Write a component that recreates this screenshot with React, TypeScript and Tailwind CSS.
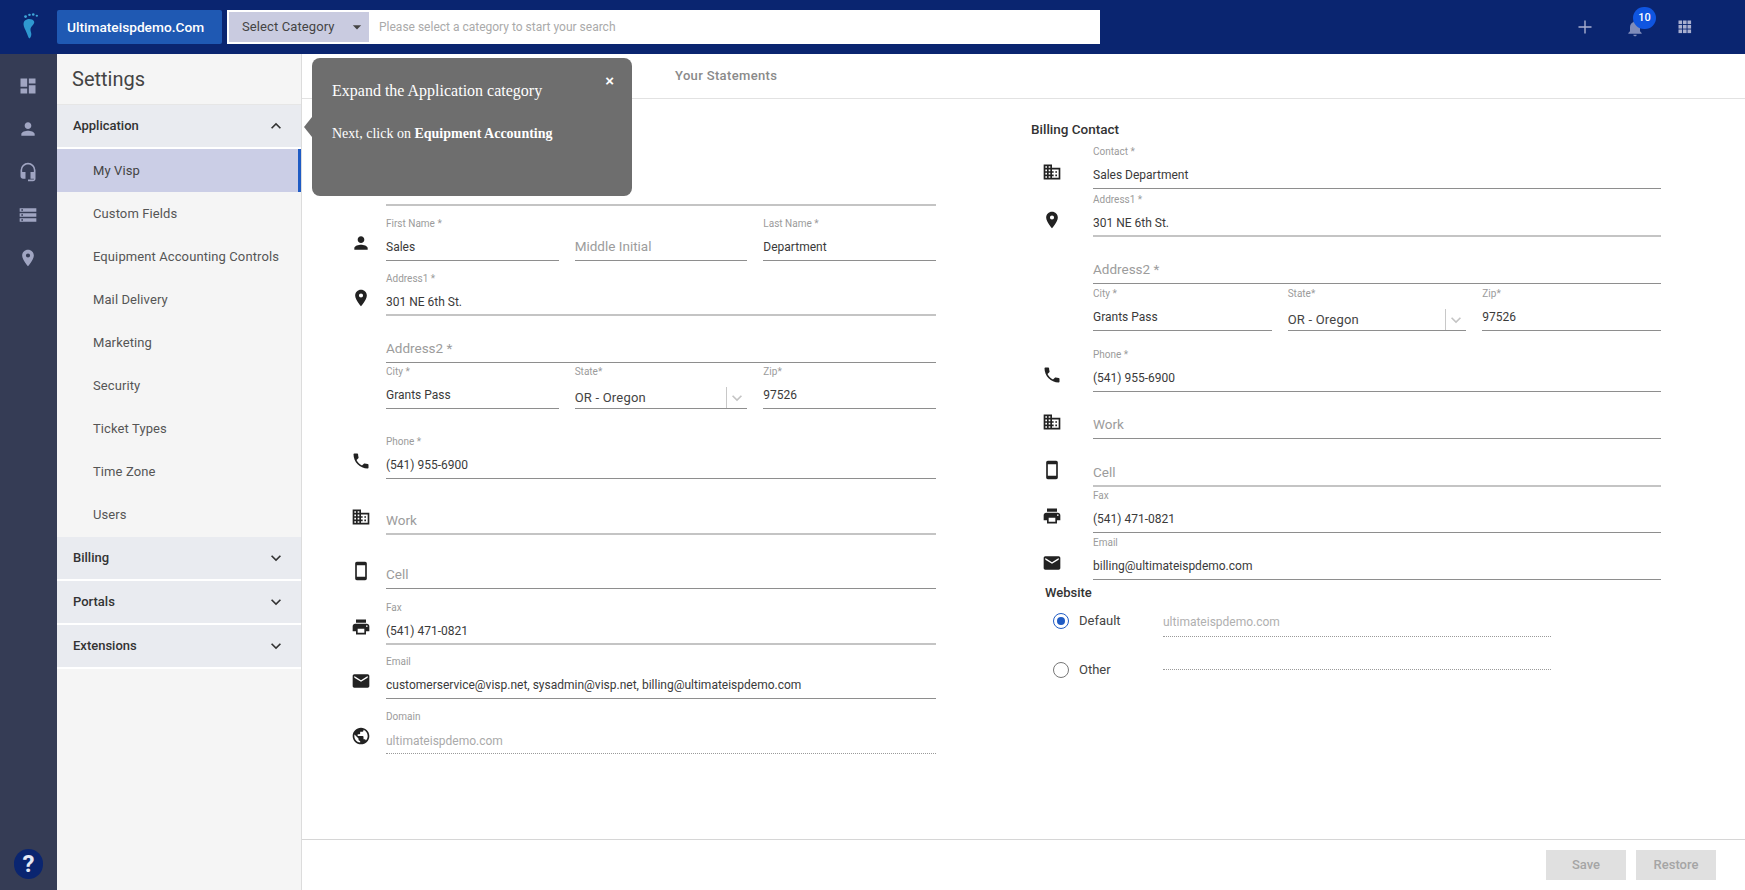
import React from "react";
import {
  MdDashboard, MdPerson, MdHeadsetMic, MdStorage, MdPlace, MdDomain, MdPhone, MdStayCurrentPortrait,
  MdPrint, MdEmail, MdPublic, MdNotifications, MdExpandLess, MdExpandMore, MdArrowDropDown,
} from "react-icons/md";

type IconT = React.ComponentType<{ className?: string }>;

function Label({ children }: { children: React.ReactNode }) {
  return <div className="text-[10px] leading-[12px] text-[#9b9b9b] mb-[5px] whitespace-nowrap">{children}</div>;
}

function Field({ label, value, placeholder, soft, cls }: { label?: string; value?: string; placeholder?: string; soft?: boolean; cls?: string }) {
  return (
    <div className={`flex flex-col justify-end min-w-0 ${cls ?? "flex-1"}`}>
      {label && <Label>{label}</Label>}
      <div className={`h-[26px] flex items-center ${soft ? "border-b-2 border-[#c4c4c4]" : "border-b border-[#8e8e8e]"}`}>
        {placeholder ? (
          <span className="text-[13.5px] text-[#9c9c9c] -mt-[2px]">{placeholder}</span>
        ) : (
          <span className="text-[12px] whitespace-nowrap text-[#3a3a3a] -mt-[1px]">{value}</span>
        )}
      </div>
    </div>
  );
}

function StateField() {
  return (
    <div className="flex-1 flex flex-col justify-end min-w-0">
      <Label>State*</Label>
      <div className="h-[26px] border-b border-[#8e8e8e] flex items-end justify-between">
        <span className="text-[13px] tracking-[0.2px] text-[#444] pb-[1px]">OR - Oregon</span>
        <span className="w-[21px] h-[21px] border-l border-[#c8c8c8] flex items-center justify-center">
          <MdExpandMore className="text-[20px] text-[#c4c4c4]" />
        </span>
      </div>
    </div>
  );
}

function Row({ icon: Icon, h, gapCls, children }: { icon?: IconT; h: string; gapCls: string; children: React.ReactNode }) {
  return (
    <div className={`flex items-end ${h}`}>
      <div className={`w-[22px] shrink-0 h-[22px] flex items-center justify-center ${gapCls}`}>
        {Icon && <Icon className="text-[20px] text-[#222]" />}
      </div>
      <div className="flex-1 flex gap-[16px] min-w-0">{children}</div>
    </div>
  );
}

function Foot() {
  return (
    <svg width="16" height="26" viewBox="2.500 2.500 13.500 24" preserveAspectRatio="none">
      <path d="M5 9.500c2-2.300 6.500-1.800 7.600.6.9 2-1.200 3.600-2.400 5.600-.9 1.600-.5 3.300 0 5 .5 1.800-.1 4.300-1.500 5.300-.7-.4-1.500-3.300-2.500-5.800-1-2.600-2.300-4.700-2.400-7 0-1.500.3-2.700 1.200-3.700z" fill="#2e98d0" />
      <circle cx="5.500" cy="5.800" r="1.200" fill="#3fa6d8" />
      <circle cx="8.800" cy="4.200" r="1.100" fill="#3fa6d8" />
      <circle cx="12" cy="3.900" r="1.100" fill="#3fa6d8" />
      <circle cx="15" cy="5" r="1" fill="#3fa6d8" />
    </svg>
  );
}

function Rail() {
  const icons: IconT[] = [MdDashboard, MdPerson, MdHeadsetMic, MdStorage, MdPlace];
  return (
    <aside className="w-[57px] shrink-0 bg-[#353c55] flex flex-col items-center pt-[10px]">
      {icons.map((I, i) => (
        <div key={i} className="h-[43px] w-full flex items-center justify-center">
          <I className="text-[20px] text-[#a0a5c2] -ml-[1px]" />
        </div>
      ))}
      <div className="mt-auto mb-[11px] w-[29px] h-[30px] rounded-full bg-[#0a2570] flex items-center justify-center text-[#e6e9f5] text-[24px] font-bold leading-none">?</div>
    </aside>
  );
}

function Section({ label, open }: { label: string; open?: boolean }) {
  const Ico = open ? MdExpandLess : MdExpandMore;
  return (
    <div className="h-[44px] bg-[#e9ebf0] border-b-2 border-white flex items-center justify-between pl-[16px] pr-[15px] shrink-0">
      <span className="text-[13px] font-medium text-[#333]">{label}</span>
      <Ico className="text-[20px] text-[#333]" />
    </div>
  );
}

function Item({ label, active }: { label: string; active?: boolean }) {
  return (
    <div className={`h-[43px] flex items-center pl-[36px] text-[13px] tracking-[0.1px] shrink-0 ${active ? "bg-[#cbcee6] border-r-[3px] border-[#1f5bc4] text-[#444]" : "text-[#555]"}`}>
      {label}
    </div>
  );
}

function SettingsNav() {
  return (
    <nav className="w-[245px] shrink-0 bg-[#f5f5f5] border-r border-[#dcdcdc] flex flex-col">
      <div className="h-[51px] shrink-0 flex items-center pl-[15px] text-[20px] text-[#444] border-b border-[#e6e6e6]">Settings</div>
      <Section label="Application" open />
      <div className="pb-[1px] flex flex-col">
        <Item label="My Visp" active />
        {["Custom Fields", "Equipment Accounting Controls", "Mail Delivery", "Marketing", "Security", "Ticket Types", "Time Zone", "Users"].map((l) => (
          <Item key={l} label={l} />
        ))}
      </div>
      <Section label="Billing" />
      <Section label="Portals" />
      <Section label="Extensions" />
    </nav>
  );
}

function LeftForm() {
  const g = "mr-[14px] mb-[7px]";
  return (
    <div className="w-[586px] ml-[48px] shrink-0">
      <Row h="h-[107px]" gapCls={g}><Field soft value="" /></Row>
      <Row icon={MdPerson} h="h-[55px]" gapCls={g}>
        <Field label="First Name *" value="Sales" />
        <Field placeholder="Middle Initial" />
        <Field label="Last Name *" value="Department" />
      </Row>
      <Row icon={MdPlace} h="h-[55px]" gapCls={g}><Field soft label="Address1 *" value="301 NE 6th St." /></Row>
      <Row h="h-[47px]" gapCls={g}><Field placeholder="Address2 *" /></Row>
      <Row h="h-[46px]" gapCls={g}>
        <Field label="City *" value="Grants Pass" />
        <StateField />
        <Field label="Zip*" value="97526" />
      </Row>
      <Row icon={MdPhone} h="h-[70px]" gapCls={g}><Field label="Phone *" value="(541) 955-6900" /></Row>
      <Row icon={MdDomain} h="h-[56px]" gapCls={g}><Field soft placeholder="Work" /></Row>
      <Row icon={MdStayCurrentPortrait} h="h-[54px]" gapCls={g}><Field placeholder="Cell" /></Row>
      <Row icon={MdPrint} h="h-[56px]" gapCls={g}><Field soft label="Fax" value="(541) 471-0821" /></Row>
      <Row icon={MdEmail} h="h-[54px]" gapCls={g}><Field label="Email" value="customerservice@visp.net, sysadmin@visp.net, billing@ultimateispdemo.com" /></Row>
      <Row icon={MdPublic} h="h-[55px]" gapCls={g}>
        <div className="flex-1 flex flex-col justify-end">
          <Label>Domain</Label>
          <div className="h-[26px] flex items-center border-b border-dotted border-[#9a9a9a] text-[12px] text-[#aaa]">ultimateispdemo.com</div>
        </div>
      </Row>
    </div>
  );
}

function Radio({ on, label }: { on?: boolean; label: string }) {
  return (
    <div className="w-[118px] h-[20px] pl-[8px] flex items-center shrink-0">
      <span className={`w-[16px] h-[16px] rounded-full border-[1.5px] flex items-center justify-center ${on ? "border-[#1f5bc4]" : "border-[#777]"}`}>
        {on && <span className="w-[8px] h-[8px] rounded-full bg-[#1f5bc4]" />}
      </span>
      <span className="ml-[10px] text-[13px] text-[#444]">{label}</span>
    </div>
  );
}

function RightForm() {
  const g = "ml-[10px] mr-[30px] mb-[6px]";
  return (
    <div className="w-[630px] ml-[95px] shrink-0 pt-[21px]">
      <div className="h-[18px] flex items-center text-[13.5px] font-medium text-[#333]">Billing Contact</div>
      <Row icon={MdDomain} h="h-[51px]" gapCls={g}><Field label="Contact *" value="Sales Department" /></Row>
      <Row icon={MdPlace} h="h-[48px]" gapCls={g}><Field soft label="Address1 *" value="301 NE 6th St." /></Row>
      <Row h="h-[47px]" gapCls={g}><Field placeholder="Address2 *" /></Row>
      <Row h="h-[47px]" gapCls={g}>
        <Field label="City *" value="Grants Pass" />
        <StateField />
        <Field label="Zip*" value="97526" />
      </Row>
      <Row icon={MdPhone} h="h-[61px]" gapCls={g}><Field label="Phone *" value="(541) 955-6900" /></Row>
      <Row icon={MdDomain} h="h-[47px]" gapCls={g}><Field placeholder="Work" /></Row>
      <Row icon={MdStayCurrentPortrait} h="h-[48px]" gapCls={g}><Field soft placeholder="Cell" /></Row>
      <Row icon={MdPrint} h="h-[46px]" gapCls={g}><Field label="Fax" value="(541) 471-0821" /></Row>
      <Row icon={MdEmail} h="h-[47px]" gapCls={g}><Field label="Email" value="billing@ultimateispdemo.com" /></Row>
      <div className="ml-[14px] mt-[4px] h-[18px] flex items-center text-[13px] font-medium text-[#333]">Website</div>
      <div className="ml-[14px] mt-[9px] flex items-start">
        <Radio on label="Default" />
        <div className="w-[388px] h-[26px] pb-[3px] border-b border-dotted border-[#9a9a9a] flex items-center text-[12px] text-[#b0b0b0]">ultimateispdemo.com</div>
      </div>
      <div className="ml-[14px] mt-[23px] flex items-start">
        <Radio label="Other" />
        <div className="w-[388px] h-[10px] border-b border-dotted border-[#9a9a9a]" />
      </div>
    </div>
  );
}

function Tooltip() {
  return (
    <div className="absolute left-[312px] top-[58px] w-[320px] h-[138px] rounded-[8px] bg-[#6e6e6e] text-white font-['Liberation_Serif',serif] pl-[20px] pt-[24px]">
      <span className="absolute -left-[8px] top-[59px] w-0 h-0 border-y-[10px] border-y-transparent border-r-[8px] border-r-[#6e6e6e]" />
      <button className="absolute right-[18px] top-[14px] text-[15px] font-bold leading-[18px] font-['Liberation_Sans',sans-serif]">×</button>
      <div className="text-[16px] leading-[18px]">Expand the Application category</div>
      <div className="text-[14px] leading-[18px] mt-[25px]">Next, click on <b>Equipment Accounting</b></div>
    </div>
  );
}

export default function App() {
  return (
    <div className="relative w-[1745px] h-[890px] overflow-hidden bg-white flex flex-col font-['Roboto',sans-serif]">
      <header className="h-[54px] shrink-0 bg-[#0a2570] flex items-center">
        <div className="w-[57px] flex justify-center pl-[3px] -mt-[2px]"><Foot /></div>
        <div className="w-[165px] h-[34px] rounded-[2px] bg-[#1f59b3] flex items-center pl-[10px] text-[13.7px] font-medium text-white">Ultimateispdemo.Com</div>
        <div className="ml-[5px] w-[873px] h-[34px] bg-white p-[2px] flex items-stretch">
          <div className="w-[140px] bg-[#c9cbe0] flex items-center justify-between pl-[13px] pr-[2px] text-[13px] tracking-[0.1px] text-[#444]">
            Select Category
            <MdArrowDropDown className="text-[20px] text-[#444]" />
          </div>
          <div className="pl-[10px] flex items-center text-[12px] text-[#aaa]">Please select a category to start your search</div>
        </div>
        <div className="ml-auto flex items-center pr-[48px]">
          <svg className="w-[24px] h-[24px] mr-[26px]" viewBox="0 0 24 24" fill="none" stroke="#a9afcf" strokeWidth="1.400">
            <path d="M12 5.500v13M5.500 12h13" />
          </svg>
          <div className="relative w-[24px] h-[24px] mr-[26px] flex items-center justify-center">
            <MdNotifications className="text-[20px] text-[#7f8cba] mt-[2px]" />
            <span className="absolute -top-[8px] left-[10px] w-[23px] h-[22px] rounded-full bg-[#0f55e0] text-white text-[11px] font-medium flex items-center justify-center">10</span>
          </div>
          <svg className="w-[24px] h-[24px]" viewBox="0 0 24 24" fill="#a9afcf">
            {[5.500, 10, 14.500].map((y) => [5.500, 10, 14.500].map((x) => (
              <rect key={`${x}-${y}`} x={x} y={y} width="3.600" height="3.600" />
            )))}
          </svg>
        </div>
      </header>
      <div className="flex-1 flex min-h-0">
        <Rail />
        <SettingsNav />
        <main className="flex-1 flex flex-col min-w-0">
          <div className="h-[45px] shrink-0 border-b border-[#e2e2e2] flex items-center pl-[373px] text-[13px] font-medium tracking-[0.35px] text-[#8a8a8a]">Your Statements</div>
          <div className="flex-1 flex items-start min-h-0">
            <LeftForm />
            <RightForm />
          </div>
          <div className="h-[51px] shrink-0 border-t border-[#d6d6d6] flex items-center justify-end gap-[10px] pr-[29px]">
            {["Save", "Restore"].map((b) => (
              <button key={b} className="w-[80px] h-[30px] bg-[#e0e0e0] text-[13px] font-medium text-[#a5a5a5]">{b}</button>
            ))}
          </div>
        </main>
      </div>
      <Tooltip />
    </div>
  );
}
